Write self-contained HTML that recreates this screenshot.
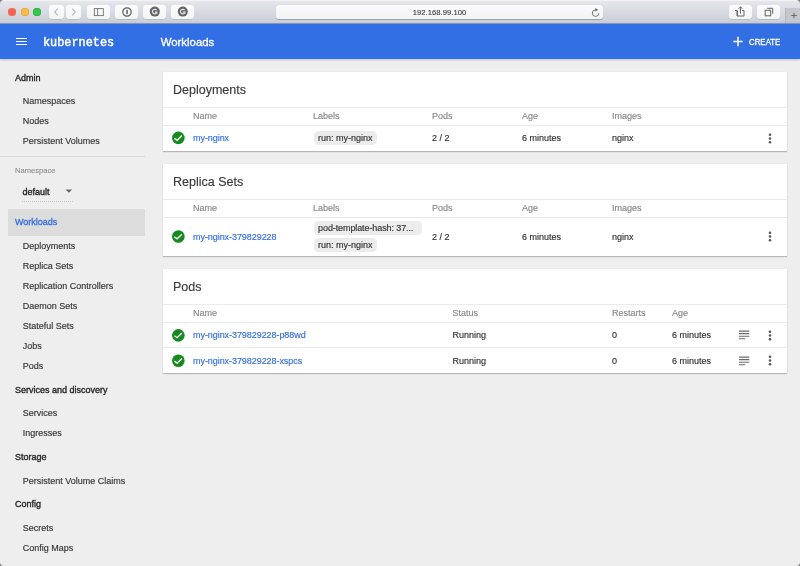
<!DOCTYPE html>
<html><head><meta charset="utf-8">
<style>
*{box-sizing:border-box;margin:0;padding:0}
html,body{width:800px;height:566px;overflow:hidden;background:#eeeeee;font-family:"Liberation Sans",sans-serif;position:relative}
.a{position:absolute;white-space:nowrap;line-height:normal}
#chrome{position:absolute;left:0;top:0;width:800px;height:23px;background:linear-gradient(#ececf0 0px,#e4e4ec 2px,#cccfd8 22px)}
.btn{position:absolute;top:5px;height:13.7px;background:linear-gradient(#fcfcfc,#f4f4f4);border-radius:3px;box-shadow:0 0.5px 0.6px rgba(0,0,0,.22)}
.btn svg{position:absolute;left:0;top:0}
.tl{position:absolute;top:8px;width:8px;height:8px;border-radius:50%}
#url{position:absolute;left:276px;top:5px;width:327px;height:14px;background:linear-gradient(#fbfbfb,#f3f3f3);border-radius:3px;box-shadow:0 0.5px 0.8px rgba(0,0,0,.25)}
#hdr{position:absolute;left:0;top:23px;width:800px;height:36px;background:#326fe4;border-top:1px solid #8294c2;box-shadow:0 1px 2px rgba(0,0,0,.2)}
.side{font-size:9px;color:#353535;-webkit-text-stroke:0.15px #353535}
.sh{color:#262626;-webkit-text-stroke:0.35px #262626}
.card{position:absolute;left:163px;width:624px;background:#fff;box-shadow:0 1px 1px rgba(0,0,0,.22),0 0 1px rgba(0,0,0,.08)}
.title{position:absolute;left:10px;font-size:12.5px;color:#3a3a3a;white-space:nowrap;-webkit-text-stroke:0.15px #3a3a3a}
.hl{position:absolute;left:0;width:624px;height:1px;background:#ebebeb}
.th{position:absolute;font-size:9px;color:#888;white-space:nowrap;-webkit-text-stroke:0.15px #888}
.td{position:absolute;font-size:9px;color:#303030;white-space:nowrap;-webkit-text-stroke:0.15px currentColor}
.lnk{color:#326de6;letter-spacing:-0.06px}
.chip{position:absolute;height:14.6px;background:#ececec;border-radius:4.5px;font-size:9px;color:#303030;-webkit-text-stroke:0.15px #303030;padding:0 4.5px;line-height:14.6px;white-space:nowrap}
.ok{position:absolute;left:7px;width:16px;height:14px}
.kb{position:absolute;left:604.5px;width:4px;height:11px}
.kb svg,.lst svg,svg.ok{display:block}
.lst{position:absolute;left:575.4px;width:12px;height:11px}
</style></head><body>
<div id="root" style="position:absolute;left:0;top:0;width:800px;height:566px;background:#eeeeee;will-change:transform">
<div id="chrome">
  <div style="position:absolute;left:0;top:0;width:800px;height:1px;background:#f2f2f2"></div>
  <div class="tl" style="left:8px;background:#fc605b;box-shadow:inset 0 0 0 0.6px #e0793e"></div>
  <div class="tl" style="left:20.5px;background:#fdbc40;box-shadow:inset 0 0 0 0.6px #de9a3a"></div>
  <div class="tl" style="left:33px;background:#34c84a;box-shadow:inset 0 0 0 0.6px #2aa63b"></div>
  <div class="btn" style="left:49px;width:15px"><svg width="15" height="14"><path d="M8.8 3.6 L5.6 7 L8.8 10.4" fill="none" stroke="#b8b8b8" stroke-width="1.1"/></svg></div>
  <div class="btn" style="left:65.5px;width:15px"><svg width="15" height="14"><path d="M6.2 3.6 L9.4 7 L6.2 10.4" fill="none" stroke="#b8b8b8" stroke-width="1.1"/></svg></div>
  <div class="btn" style="left:87px;width:23px"><svg width="23" height="14"><rect x="7.3" y="3.6" width="9" height="7" fill="none" stroke="#707070" stroke-width="0.9"/><line x1="10.6" y1="3.6" x2="10.6" y2="10.6" stroke="#707070" stroke-width="0.9"/></svg></div>
  <div class="btn" style="left:115px;width:23px"><svg width="23" height="14"><circle cx="12" cy="7" r="4.2" fill="none" stroke="#5e5e5e" stroke-width="1.2"/><ellipse cx="12" cy="6" rx="0.95" ry="1.2" fill="#666"/><ellipse cx="12" cy="8" rx="0.95" ry="1.2" fill="#666"/></svg></div>
  <div class="btn" style="left:143px;width:23px"><svg width="23" height="14"><circle cx="11.8" cy="6.6" r="5" fill="#656565"/><path d="M13.6 5.2 A2.3 2.3 0 1 0 13.6 8" fill="none" stroke="#e4e4e4" stroke-width="1.2"/><rect x="12.2" y="6.4" width="2.2" height="2.2" fill="#e4e4e4"/></svg></div>
  <div class="btn" style="left:171px;width:23px"><svg width="23" height="14"><circle cx="11.8" cy="6.6" r="5" fill="#656565"/><path d="M13.6 5.2 A2.3 2.3 0 1 0 13.6 8" fill="none" stroke="#e4e4e4" stroke-width="1.2"/><rect x="12.2" y="6.4" width="2.2" height="2.2" fill="#e4e4e4"/></svg></div>
  <div id="url"><span class="a" style="left:136.8px;top:3.4px;font-size:7.7px;color:#3a3a3a;-webkit-text-stroke:0.1px #3a3a3a">192.168.99.100</span>
    <svg style="position:absolute;left:314px;top:1px" width="12" height="11"><path d="M5.6 3.8 A3.3 3.3 0 1 0 8.9 7.1" fill="none" stroke="#6a6a6a" stroke-width="0.9"/><path d="M5.3 1.9 L8.2 3.8 L5.3 5.7 Z" fill="#6a6a6a"/></svg>
  </div>
  <div class="btn" style="left:729px;width:23px"><svg width="23" height="14"><path d="M6 5.5 H8 M13 5.5 H15 V11 H8 V5.5" fill="none" stroke="#666" stroke-width="1"/><path d="M8.5 5.5 V11" fill="none" stroke="#666" stroke-width="1"/><path d="M11.5 1.8 V8.5" stroke="#666" stroke-width="1"/><path d="M9.6 3.8 L11.5 1.8 L13.4 3.8" fill="none" stroke="#666" stroke-width="1"/></svg></div>
  <div class="btn" style="left:757px;width:23px"><svg width="23" height="14"><rect x="8.2" y="5.3" width="5.5" height="5.5" fill="none" stroke="#666" stroke-width="1"/><path d="M10.2 3.3 H15.7 V8.8" fill="none" stroke="#666" stroke-width="1"/></svg></div>
  <div style="position:absolute;left:785px;top:8px;width:15px;height:15px;background:#c5c7cd;border-left:0.5px solid #b5b7bd"><svg width="15" height="15" style="position:absolute;left:0;top:0"><path d="M8 4.8 V10.2 M5.3 7.5 H10.7" stroke="#666" stroke-width="1"/></svg></div>
  <div style="position:absolute;left:0;top:0;width:3px;height:3px;background:radial-gradient(circle at 3px 3px,transparent 2.3px,#7a7a7a 3.2px)"></div>
  <div style="position:absolute;left:797px;top:0;width:3px;height:3px;background:radial-gradient(circle at 0 3px,transparent 2.3px,#7a7a7a 3.2px)"></div>
</div>
<div id="hdr">
  <div class="a" style="left:16px;top:13.9px;width:11px;height:1.3px;background:#fff"></div>
  <div class="a" style="left:16px;top:17px;width:11px;height:1.3px;background:#fff"></div>
  <div class="a" style="left:16px;top:20.1px;width:11px;height:1.3px;background:#fff"></div>
  <div class="a" style="left:43.4px;top:11px;font-family:'Liberation Mono';font-size:13.5px;color:#fff;transform:scaleX(0.879);transform-origin:0 0;-webkit-text-stroke:0.5px #fff">kubernetes</div>
  <div class="a" style="left:160.7px;top:12px;font-size:11.4px;color:#fff;-webkit-text-stroke:0.3px #fff">Workloads</div>
  <svg class="a" style="left:732px;top:12.3px" width="12" height="11"><path d="M6 0.8 V10.2 M1.3 5.5 H10.7" stroke="#fff" stroke-width="1.5"/></svg>
  <div class="a" style="left:749.3px;top:13px;font-size:9px;color:#fff;transform:scaleX(0.875);transform-origin:0 0;-webkit-text-stroke:0.3px #fff">CREATE</div>
</div>

<!-- sidebar -->
<div class="side">
  <div class="a sh" style="left:15px;top:73px">Admin</div>
  <div class="a" style="left:22.7px;top:96.3px">Namespaces</div>
  <div class="a" style="left:22.7px;top:116.3px">Nodes</div>
  <div class="a" style="left:22.7px;top:136.3px">Persistent Volumes</div>
  <div class="a" style="left:0;top:156px;width:145px;height:1px;background:#d9d9d9"></div>
  <div class="a" style="left:15px;top:165.5px;font-size:7.6px;color:#8c8c8c;-webkit-text-stroke:0.1px #8c8c8c">Namespace</div>
  <div class="a sh" style="left:22.5px;top:187px">default</div>
  <svg class="a" style="left:65px;top:189px" width="8" height="5"><path d="M0.6 0.4 H7.2 L3.9 3.8 Z" fill="#666"/></svg>
  <div class="a" style="left:22px;top:201px;width:51px;border-top:1px dotted #c4c4c4"></div>
  <div class="a" style="left:7.7px;top:208.7px;width:137.3px;height:27px;background:#dcdcdc"></div>
  <div class="a" style="left:15px;top:217.3px;color:#326de6;-webkit-text-stroke:0.3px #326de6">Workloads</div>
  <div class="a" style="left:22.7px;top:241.3px">Deployments</div>
  <div class="a" style="left:22.7px;top:261.3px">Replica Sets</div>
  <div class="a" style="left:22.7px;top:281.3px">Replication Controllers</div>
  <div class="a" style="left:22.7px;top:301.3px">Daemon Sets</div>
  <div class="a" style="left:22.7px;top:321.3px">Stateful Sets</div>
  <div class="a" style="left:22.7px;top:341.3px">Jobs</div>
  <div class="a" style="left:22.7px;top:361.3px">Pods</div>
  <div class="a sh" style="left:15px;top:385px">Services and discovery</div>
  <div class="a" style="left:22.7px;top:408.3px">Services</div>
  <div class="a" style="left:22.7px;top:428.3px">Ingresses</div>
  <div class="a sh" style="left:15px;top:452px">Storage</div>
  <div class="a" style="left:22.7px;top:476.3px">Persistent Volume Claims</div>
  <div class="a sh" style="left:15px;top:499px">Config</div>
  <div class="a" style="left:22.7px;top:523.3px">Secrets</div>
  <div class="a" style="left:22.7px;top:543.3px">Config Maps</div>
</div>

<!-- Deployments -->
<div class="card" style="top:72px;height:79px">
  <div class="title" style="top:11px">Deployments</div>
  <div class="hl" style="top:35px"></div>
  <div class="th" style="left:30px;top:39.3px">Name</div>
  <div class="th" style="left:150px;top:39.3px">Labels</div>
  <div class="th" style="left:269px;top:39.3px">Pods</div>
  <div class="th" style="left:359px;top:39.3px">Age</div>
  <div class="th" style="left:449px;top:39.3px">Images</div>
  <div class="hl" style="top:53px"></div>
  <svg class="ok" style="top:59px" width="16" height="14"><circle cx="8.35" cy="6.9" r="6.3" fill="#168a1f"/><path d="M4.40 7.25 L7.10 9.25 L11.90 4.55" fill="none" stroke="#fff" stroke-width="1.35"/></svg>
  <div class="td lnk" style="left:30px;top:61px">my-nginx</div>
  <div class="chip" style="left:150.5px;top:58.8px">run: my-nginx</div>
  <div class="td" style="left:269px;top:61px">2 / 2</div>
  <div class="td" style="left:359px;top:61px">6 minutes</div>
  <div class="td" style="left:449px;top:61px">nginx</div>
  <div class="kb" style="top:60.5px"><svg width="4" height="11"><circle cx="2" cy="1.7" r="1.3" fill="#595959"/><circle cx="2" cy="5.5" r="1.3" fill="#595959"/><circle cx="2" cy="9.3" r="1.3" fill="#595959"/></svg></div>
</div>

<!-- Replica Sets -->
<div class="card" style="top:164px;height:92px">
  <div class="title" style="top:11px">Replica Sets</div>
  <div class="hl" style="top:35px"></div>
  <div class="th" style="left:30px;top:39.3px">Name</div>
  <div class="th" style="left:150px;top:39.3px">Labels</div>
  <div class="th" style="left:269px;top:39.3px">Pods</div>
  <div class="th" style="left:359px;top:39.3px">Age</div>
  <div class="th" style="left:449px;top:39.3px">Images</div>
  <div class="hl" style="top:53px"></div>
  <svg class="ok" style="top:66px" width="16" height="14"><circle cx="8.35" cy="6.5" r="6.3" fill="#168a1f"/><path d="M4.40 6.85 L7.10 8.85 L11.90 4.15" fill="none" stroke="#fff" stroke-width="1.35"/></svg>
  <div class="td lnk" style="left:30px;top:68.3px">my-nginx-379829228</div>
  <div class="chip" style="left:150.5px;top:56.6px;width:108.8px;padding-left:4.6px;letter-spacing:-0.1px">pod-template-hash: 37...</div>
  <div class="chip" style="left:150.5px;top:73.9px">run: my-nginx</div>
  <div class="td" style="left:269px;top:68.3px">2 / 2</div>
  <div class="td" style="left:359px;top:68.3px">6 minutes</div>
  <div class="td" style="left:449px;top:68.3px">nginx</div>
  <div class="kb" style="top:67px"><svg width="4" height="11"><circle cx="2" cy="1.7" r="1.3" fill="#595959"/><circle cx="2" cy="5.5" r="1.3" fill="#595959"/><circle cx="2" cy="9.3" r="1.3" fill="#595959"/></svg></div>
</div>

<!-- Pods -->
<div class="card" style="top:269px;height:104px">
  <div class="title" style="top:11px">Pods</div>
  <div class="hl" style="top:35px"></div>
  <div class="th" style="left:30px;top:39.3px">Name</div>
  <div class="th" style="left:289.5px;top:39.3px">Status</div>
  <div class="th" style="left:449px;top:39.3px">Restarts</div>
  <div class="th" style="left:509px;top:39.3px">Age</div>
  <div class="hl" style="top:53px"></div>
  <svg class="ok" style="top:60px" width="16" height="14"><circle cx="8.35" cy="6.35" r="6.3" fill="#168a1f"/><path d="M4.40 6.70 L7.10 8.70 L11.90 4.00" fill="none" stroke="#fff" stroke-width="1.35"/></svg>
  <div class="td lnk" style="left:30px;top:61.3px">my-nginx-379829228-p88wd</div>
  <div class="td" style="left:289.5px;top:61.3px">Running</div>
  <div class="td" style="left:449px;top:61.3px">0</div>
  <div class="td" style="left:509px;top:61.3px">6 minutes</div>
  <div class="lst" style="top:61.3px"><svg width="12" height="11"><path d="M1 1.1 H11.3 M1 3.65 H11.3 M1 6.2 H11.3 M1 8.75 H7.3" stroke="#6a6a6a" stroke-width="1.1"/></svg></div>
  <div class="kb" style="top:60.8px"><svg width="4" height="11"><circle cx="2" cy="1.7" r="1.3" fill="#595959"/><circle cx="2" cy="5.5" r="1.3" fill="#595959"/><circle cx="2" cy="9.3" r="1.3" fill="#595959"/></svg></div>
  <div class="hl" style="top:78px"></div>
  <svg class="ok" style="top:85px" width="16" height="14"><circle cx="8.35" cy="6.8" r="6.3" fill="#168a1f"/><path d="M4.40 7.15 L7.10 9.15 L11.90 4.45" fill="none" stroke="#fff" stroke-width="1.35"/></svg>
  <div class="td lnk" style="left:30px;top:87px">my-nginx-379829228-xspcs</div>
  <div class="td" style="left:289.5px;top:87px">Running</div>
  <div class="td" style="left:449px;top:87px">0</div>
  <div class="td" style="left:509px;top:87px">6 minutes</div>
  <div class="lst" style="top:87.1px"><svg width="12" height="11"><path d="M1 1.1 H11.3 M1 3.65 H11.3 M1 6.2 H11.3 M1 8.75 H7.3" stroke="#6a6a6a" stroke-width="1.1"/></svg></div>
  <div class="kb" style="top:86.3px"><svg width="4" height="11"><circle cx="2" cy="1.7" r="1.3" fill="#595959"/><circle cx="2" cy="5.5" r="1.3" fill="#595959"/><circle cx="2" cy="9.3" r="1.3" fill="#595959"/></svg></div>
</div>
<div style="position:absolute;left:0;top:563px;width:3px;height:3px;background:radial-gradient(circle at 3px 0,transparent 2.3px,#7a7a7a 3.2px)"></div>
<div style="position:absolute;left:797px;top:563px;width:3px;height:3px;background:radial-gradient(circle at 0 0,transparent 2.3px,#7a7a7a 3.2px)"></div>
</div>
</body></html>
